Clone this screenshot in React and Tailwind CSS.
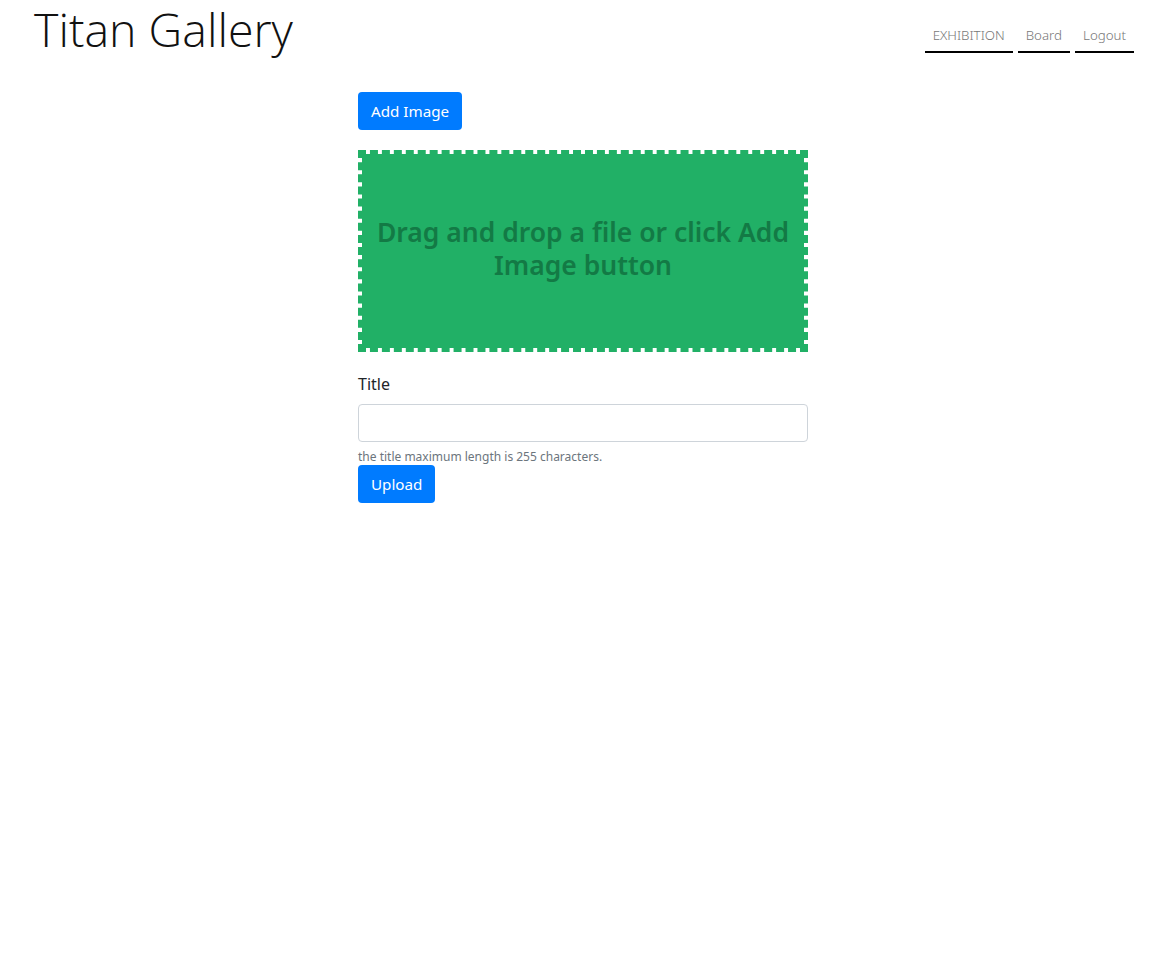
export default function App() {
  return (
    <div className="min-h-screen bg-white text-[#212529]" style={{ fontFamily: '"Noto Sans", "Open Sans", sans-serif' }}>
      <header className="flex items-start justify-between pl-[34px] pr-[21px]">
        <h1 className="text-[46.5px] font-light leading-[58px] text-[#111]" style={{ fontFamily: '"Open Sans", sans-serif' }}>
          Titan Gallery
        </h1>
        <nav className="mt-[26px] flex gap-[5px]">
          <a className="border-b-2 border-black px-2 pb-[5px] text-[13.3px] font-light text-[#777]">EXHIBITION</a>
          <a className="border-b-2 border-black px-2 pb-[5px] text-[13.3px] font-light text-[#777]">Board</a>
          <a className="border-b-2 border-black px-2 pb-[5px] text-[13.3px] font-light text-[#777]">Logout</a>
        </nav>
      </header>

      <main className="ml-[358px] mt-[34px] w-[450px]">
        <button className="h-[38px] rounded-[4px] bg-[#007bff] px-[13px] text-[15.2px] text-white">Add Image</button>

        <div className="mt-[20px] flex h-[202px] items-center justify-center border-4 border-dashed border-[#21b066] bg-[#21b066] bg-clip-padding px-3 pb-1 text-center">
          <p className="text-[26.5px] font-semibold leading-[33px] text-[#137a45]">
            Drag and drop a file or click Add Image button
          </p>
        </div>

        <label className="mt-[20px] block text-[16px] leading-[24px]">Title</label>
        <input className="mt-[8px] block h-[38px] w-full rounded-[4px] border border-[#ced4da] px-3" />
        <p className="mt-[6px] text-[12px] leading-[17px] text-[#6c757d]">the title maximum length is 255 characters.</p>
        <button className="h-[38px] rounded-[4px] bg-[#007bff] px-[13px] text-[15.2px] text-white">Upload</button>
      </main>
    </div>
  );
}
